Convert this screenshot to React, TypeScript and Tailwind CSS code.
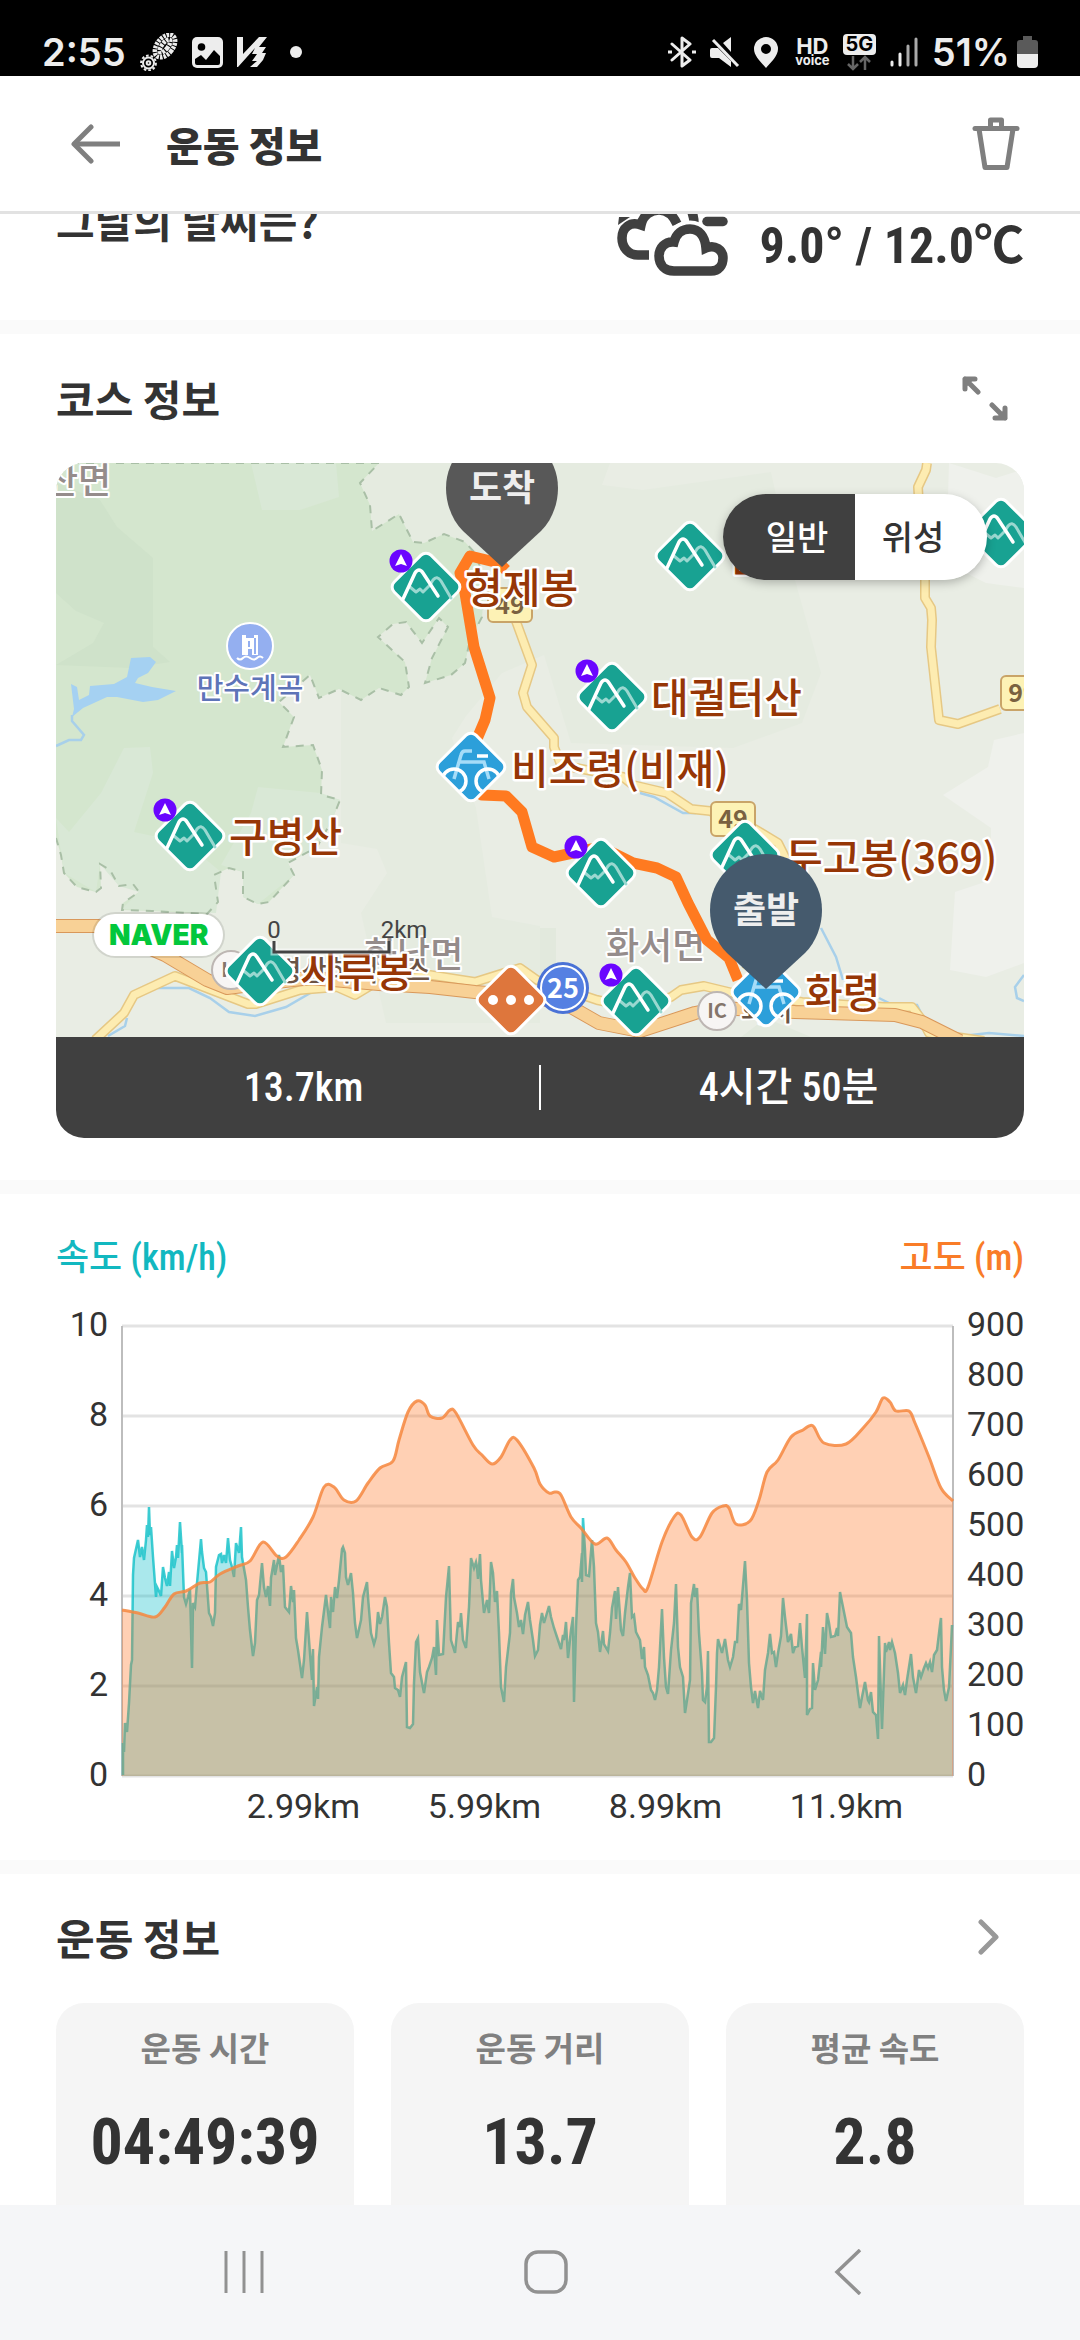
import type { ReactNode } from "react";

type Point = [number, number];

// Plot space is 831 x 450: 90 units per 2 km/h, 50 units per 100 m.
const speed: Point[] = [
  [1, 449], [1, 417], [2, 426], [3, 397], [5, 406], [7, 377], [9, 339], [10, 334], [11, 249], [12, 232], [16, 214], [18, 231],
  [20, 221], [22, 234], [24, 214], [25, 199], [26, 211], [27, 181], [28, 209], [29, 201], [31, 231], [34, 271], [35, 261], [37, 265],
  [39, 270], [41, 241], [43, 252], [45, 260], [47, 246], [48, 260], [50, 225], [52, 242], [54, 231], [55, 219], [56, 232], [58, 196],
  [60, 227], [60, 219], [62, 271], [64, 278], [66, 271], [68, 263], [70, 342], [71, 277], [73, 281], [75, 257], [79, 213], [80, 226],
  [82, 242], [84, 246], [87, 287], [89, 291], [91, 300], [93, 287], [94, 241], [97, 229], [99, 228], [100, 237], [102, 229], [104, 237],
  [106, 212], [108, 234], [110, 241], [112, 251], [114, 217], [117, 227], [119, 201], [120, 231], [124, 254], [126, 281], [128, 304],
  [131, 330], [133, 317], [135, 274], [137, 269], [140, 237], [142, 261], [144, 271], [146, 260], [148, 280], [149, 252], [152, 234],
  [153, 249], [157, 229], [159, 246], [161, 239], [163, 281], [167, 286], [169, 260], [171, 276], [172, 264], [174, 312], [176, 324],
  [180, 352], [182, 334], [185, 286], [187, 314], [190, 354], [191, 323], [192, 380], [195, 361], [196, 373], [197, 331], [200, 301],
  [204, 269], [208, 302], [209, 271], [211, 286], [213, 261], [215, 272], [217, 254], [220, 223], [221, 221], [223, 227], [224, 251],
  [226, 259], [229, 247], [231, 267], [233, 297], [235, 312], [239, 294], [241, 271], [245, 256], [246, 271], [249, 307], [252, 318],
  [254, 311], [256, 286], [258, 298], [260, 291], [263, 271], [265, 281], [267, 317], [269, 347], [272, 351], [273, 362], [276, 364],
  [278, 371], [280, 351], [284, 336], [285, 401], [288, 402], [291, 398], [292, 357], [294, 316], [296, 312], [298, 346], [302, 367],
  [305, 346], [307, 341], [310, 332], [312, 321], [314, 349], [315, 294], [317, 329], [321, 328], [324, 271], [327, 240], [329, 314],
  [333, 327], [336, 296], [338, 301], [339, 287], [341, 314], [344, 322], [347, 281], [349, 232], [352, 242], [354, 236], [355, 241],
  [356, 253], [358, 228], [359, 254], [362, 287], [365, 274], [367, 287], [369, 236], [371, 247], [373, 276], [375, 265], [377, 307],
  [379, 361], [382, 376], [384, 341], [388, 307], [389, 267], [391, 253], [392, 271], [395, 287], [397, 301], [399, 294], [401, 308],
  [403, 289], [406, 276], [408, 294], [411, 314], [413, 330], [416, 324], [418, 299], [420, 287], [422, 297], [427, 280], [429, 291],
  [432, 302], [435, 311], [439, 323], [441, 309], [442, 314], [444, 296], [446, 332], [449, 304], [451, 291], [452, 376], [454, 301],
  [456, 254], [458, 251], [460, 227], [460, 256], [461, 192], [463, 224], [464, 249], [467, 250], [470, 214], [472, 241], [474, 297],
  [476, 306], [478, 326], [481, 305], [482, 318], [486, 325], [488, 307], [490, 282], [493, 265], [494, 293], [496, 261], [499, 304],
  [501, 310], [503, 287], [506, 261], [508, 247], [510, 291], [512, 289], [514, 306], [518, 314], [520, 333], [522, 321], [523, 341],
  [526, 349], [529, 364], [531, 367], [533, 374], [535, 364], [537, 341], [540, 283], [542, 331], [544, 361], [546, 368], [549, 324],
  [552, 297], [554, 258], [556, 321], [558, 341], [561, 351], [563, 387], [565, 374], [568, 354], [569, 277], [572, 258], [573, 271],
  [575, 262], [577, 307], [580, 347], [581, 374], [583, 376], [585, 361], [586, 325], [587, 416], [589, 416], [592, 412], [594, 361],
  [595, 327], [596, 313], [600, 327], [603, 313], [606, 334], [608, 341], [611, 331], [613, 316], [615, 316], [617, 278], [619, 284],
  [623, 235], [625, 274], [627, 337], [629, 361], [631, 377], [633, 365], [636, 382], [638, 365], [641, 374], [643, 344], [646, 327],
  [648, 308], [650, 327], [652, 326], [654, 341], [656, 327], [659, 310], [661, 272], [663, 291], [666, 316], [669, 308], [671, 327],
  [673, 321], [676, 320], [678, 297], [680, 321], [683, 352], [685, 288], [685, 389], [688, 383], [690, 382], [691, 337], [693, 364],
  [696, 354], [699, 326], [699, 341], [701, 301], [703, 328], [705, 287], [707, 297], [709, 311], [713, 310], [715, 302], [716, 310],
  [718, 266], [720, 276], [723, 291], [725, 301], [729, 307], [731, 331], [734, 351], [736, 367], [738, 382], [740, 371], [743, 356],
  [746, 374], [747, 376], [749, 366], [751, 386], [754, 389], [756, 413], [757, 310], [760, 403], [763, 317], [764, 326], [767, 316],
  [768, 324], [770, 316], [773, 327], [776, 347], [778, 367], [781, 359], [783, 369], [785, 354], [789, 328], [791, 351], [794, 367],
  [797, 344], [799, 351], [802, 342], [804, 337], [806, 342], [808, 336], [810, 346], [812, 329], [815, 324], [818, 299], [819, 292],
  [820, 341], [822, 364], [824, 375], [827, 361], [829, 321], [830, 299],
];

const altitude: Point[] = [
  [0, 284], [16, 287], [33, 291], [43, 281], [52, 268], [64, 265], [78, 257], [88, 256], [98, 248], [116, 240], [128, 235],
  [141, 216], [155, 230], [164, 231], [177, 214], [191, 191], [202, 161], [212, 161], [222, 174], [234, 175], [246, 157],
  [258, 142], [271, 135], [277, 114], [286, 86], [295, 75], [303, 79], [308, 90], [320, 92], [328, 84], [334, 87], [351, 119],
  [360, 129], [370, 138], [379, 131], [388, 114], [395, 114], [412, 142], [418, 158], [427, 167], [433, 166], [439, 169],
  [449, 191], [459, 202], [473, 218], [485, 212], [494, 224], [504, 236], [513, 252], [521, 263], [526, 261], [540, 216],
  [552, 191], [559, 189], [570, 211], [578, 211], [590, 187], [601, 180], [607, 182], [614, 198], [628, 195], [637, 174],
  [645, 146], [656, 134], [669, 111], [681, 104], [687, 100], [692, 101], [702, 117], [724, 118], [742, 101], [754, 86],
  [761, 72], [768, 76], [774, 85], [787, 85], [793, 97], [807, 131], [819, 162], [831, 175],
];

const speedTicks = [10, 8, 6, 4, 2, 0];
const altitudeTicks = [900, 800, 700, 600, 500, 400, 300, 200, 100, 0];
const distanceTicks = ["2.99km", "5.99km", "8.99km", "11.9km"];

const stats = [
  { label: "운동 시간", value: "04:49:39" },
  { label: "운동 거리", value: "13.7" },
  { label: "평균 속도", value: "2.8" },
];

function linePath(points: Point[]) {
  return "M" + points.map(([x, y]) => `${x} ${y}`).join("L");
}

function smoothPath(points: Point[]) {
  let d = `M${points[0][0]} ${points[0][1]}`;
  for (let i = 0; i < points.length - 1; i++) {
    const p0 = points[Math.max(i - 1, 0)];
    const p1 = points[i];
    const p2 = points[i + 1];
    const p3 = points[Math.min(i + 2, points.length - 1)];
    d += `C${p1[0] + (p2[0] - p0[0]) / 6} ${p1[1] + (p2[1] - p0[1]) / 6} ${p2[0] - (p3[0] - p1[0]) / 6} ${p2[1] - (p3[1] - p1[1]) / 6} ${p2[0]} ${p2[1]}`;
  }
  return d;
}

function StatusBar() {
  return (
    <div className="flex h-[76px] shrink-0 items-end justify-between bg-black pr-[42px] pb-[1px] pl-[42px] text-[38px] leading-[46px] font-semibold text-[#ededed] [font-family:Inter,sans-serif]">
      <div className="flex items-center gap-[14px]">
        <span>2:55</span>
        <svg className="h-[38px] w-[38px]" viewBox="0 0 38 38" fill="none" stroke="#ededed">
          <g transform="rotate(38 25 13)">
            <ellipse cx="25" cy="13" rx="8" ry="13" strokeWidth="4.500" strokeDasharray="2.6 1" />
            <ellipse cx="25" cy="13" rx="3" ry="8" strokeWidth="4.500" strokeDasharray="2.8 1" />
          </g>
          <circle cx="8.500" cy="30" r="5.500" strokeWidth="2" />
          <circle cx="8.500" cy="30" r="7.400" strokeWidth="2" strokeDasharray="2.6 2" />
          <circle cx="8.500" cy="30" r="1.800" strokeWidth="2" />
        </svg>
        <svg className="h-[31px] w-[31px]" viewBox="0 0 31 31">
          <rect width="31" height="31" rx="5" fill="#ededed" />
          <circle cx="9.500" cy="10" r="3.800" fill="#000" />
          <path d="M3 22 9 18 14 23 22 13 28 19V26a2 2 0 0 1-2 2H5a2 2 0 0 1-2-2Z" fill="#000" />
        </svg>
        <svg className="h-[30px] w-[31px]" viewBox="0 0 31 30" fill="#ededed">
          <path d="M0 0H6V17L22 0H30L22 10H29L25 16H29L26 23 20 30H13L20 24H15L20 17H15L18 11 1 30H0Z" />
        </svg>
        <span className="ml-2 h-3 w-3 rounded-full bg-[#ededed]" />
      </div>
      <div className="flex items-center gap-[14px]">
        <svg className="h-[32px] w-[28px]" viewBox="0 0 28 32" fill="none" stroke="#ededed" strokeWidth="3">
          <path d="M4 8 22 24 14 30V2L22 8 4 24" strokeLinejoin="round" strokeLinecap="round" />
          <path d="M0 16h4M24 16h4" />
        </svg>
        <svg className="h-[31px] w-[30px]" viewBox="0 0 30 31" fill="#ededed">
          <path d="M13 6 21 0V15ZM2 11H8L21 24V30L9 21H2A2 2 0 0 1 0 19V13A2 2 0 0 1 2 11Z" />
          <path d="M3 3 28 29" stroke="#ededed" strokeWidth="3" />
        </svg>
        <svg className="h-[31px] w-[24px]" viewBox="0 0 24 31">
          <path
            d="M12 0A12 12 0 0 1 24 12C24 19 17 25 12 31 7 25 0 19 0 12A12 12 0 0 1 12 0Zm0 7a5 5 0 1 0 0 10 5 5 0 0 0 0-10Z"
            fill="#ededed"
            fillRule="evenodd"
          />
        </svg>
        <span className="ml-1 flex w-[33px] flex-col items-center text-[22px] leading-[16px] font-bold">
          HD
          <span className="text-[13px] leading-[13px]">voice</span>
        </span>
        <span className="flex w-[33px] flex-col items-center">
          <span className="w-full rounded-[4px] bg-[#ededed] text-center text-[20px] leading-[21px] font-bold text-black">
            5G
          </span>
          <svg className="h-[16px] w-[24px]" viewBox="0 0 24 16" fill="none" stroke="#666" strokeWidth="2.500">
            <path d="M6 1V14M1 9 6 14 11 9M18 15V2M13 7 18 2 23 7" />
          </svg>
        </span>
        <svg className="h-[30px] w-[28px]" viewBox="0 0 28 30" strokeWidth="3" strokeLinecap="round">
          <path d="M2 28V25M10 28V17" stroke="#ededed" />
          <path d="M18 28V9M26 28V2" stroke="#aaa" />
        </svg>
        <span className="flex items-center gap-[7px]">
          51%
          <svg className="h-[32px] w-[21px]" viewBox="0 0 21 32">
            <path d="M6 0H15V4H18A3 3 0 0 1 21 7V18H0V7A3 3 0 0 1 3 4H6Z" fill="#5a5a5a" />
            <path d="M0 18H21V28A4 4 0 0 1 17 32H4A4 4 0 0 1 0 28Z" fill="#ededed" />
          </svg>
        </span>
      </div>
    </div>
  );
}

function Header() {
  return (
    <header className="relative z-10 flex h-[138px] shrink-0 items-center border-b-[3px] border-[#e2e2e2] bg-white pr-[60px] pl-[71px]">
      <button type="button" aria-label="뒤로">
        <svg className="h-[40px] w-[50px]" viewBox="0 0 50 40" fill="none" stroke="#7f7f7f" strokeWidth="5">
          <path d="M49 20H4" />
          <path d="M20 3 3 20 20 37" strokeLinecap="round" strokeLinejoin="round" />
        </svg>
      </button>
      <h1 className="ml-[45px] flex-1 text-[40px] leading-[60px] font-black">운동 정보</h1>
      <button type="button" aria-label="삭제">
        <svg className="h-[54px] w-[48px]" viewBox="0 0 48 54" fill="none" stroke="#7f7f7f" strokeWidth="5" strokeLinejoin="round">
          <path d="M3 11.500H45" strokeLinecap="round" />
          <path d="M18.500 11V3H29.500V11M7 12 13 50.500H35L41 12" />
        </svg>
      </button>
    </header>
  );
}

function Weather() {
  return (
    <section className="-mt-10 flex items-start justify-between border-b-[14px] border-[#fafafa] px-14 pt-4 pb-11">
      <h2 className="text-[42px] leading-[60px] font-bold">그날의 날씨는?</h2>
      <div className="flex items-end gap-8">
        <svg className="h-[86px] w-[111px]" viewBox="0 0 111 86" fill="none" stroke="#404040" strokeWidth="9.500">
          <path d="M32 65H21C11 65 5 57 5 48 5 38 13 31 24 35 26 25 34 20 42 20 50 20 56 25 60 34" />
          <path d="M73 18C76 23 77 28 77 34" />
          <path d="M90 31.500H106" strokeLinecap="round" />
          <path d="M2 27H13L1 35Z" fill="#404040" stroke="none" />
          <path d="M57 81H94C102 81 106 75 106 68 106 60 98 54 89 58 88 46 82 39 73 39 65 39 59 44 57 52 48 51 42 58 42 66 42 75 48 81 57 81Z" fill="#fff" stroke="#fff" strokeWidth="17" />
          <path d="M57 81H94C102 81 106 75 106 68 106 60 98 54 89 58 88 46 82 39 73 39 65 39 59 44 57 52 48 51 42 58 42 66 42 75 48 81 57 81Z" fill="#fff" />
        </svg>
        <p className="text-[50px] leading-[60px] font-bold [font-family:'Roboto_Condensed',Roboto,'Noto_Sans_CJK_KR',sans-serif]">
          9.0° / 12.0℃
        </p>
      </div>
    </section>
  );
}

function Diamond({ x, y, color, children }: { x: number; y: number; color: string; children: ReactNode }) {
  return (
    <g transform={`translate(${x} ${y})`}>
      <rect x="-26" y="-26" width="52" height="52" rx="7" transform="rotate(45)" fill={color} stroke="#fff" strokeWidth="3" />
      {children}
    </g>
  );
}

function Mountain({ x, y, badge = false }: { x: number; y: number; badge?: boolean }) {
  return (
    <Diamond x={x} y={y} color="#18a292">
      <g fill="none" strokeWidth="3" strokeLinecap="round" strokeLinejoin="round">
        <path d="M-16 0-10 5-6 2-3 5 4-2 7-7Q11-12 15-6L25 11" stroke="#9ad8d0" />
        <path d="M-23 12-11-14Q-7-20-3-14L12 9" stroke="#fff" strokeWidth="3.500" />
      </g>
      {badge && (
        <g transform="translate(-25 -26)">
          <circle r="11.500" fill="#6a05ff" />
          <path d="M0-7 6 5 0 3-6 5Z" fill="#fff" />
        </g>
      )}
    </Diamond>
  );
}

function Bike({ x, y }: { x: number; y: number }) {
  return (
    <Diamond x={x} y={y} color="#2c9fda">
      <g fill="none" strokeWidth="3.500" clipPath="url(#diamond)">
        <path d="M1-16H-6Q-9-16-10-12L-17 12M-11-5H13L18 12" stroke="#a5dcf8" />
        <path d="M6-11H17" stroke="#fff" />
        <circle cx="-17" cy="14" r="12" stroke="#fff" />
        <circle cx="17" cy="14" r="12" stroke="#fff" />
      </g>
    </Diamond>
  );
}

function Pin({ x, y, color, label }: { x: number; y: number; color: string; label: string }) {
  return (
    <g transform={`translate(${x} ${y})`}>
      <path d="M0 79-39 43C-50 32-56 16-56 0A56 56 0 0 1 56 0C56 16 50 32 39 43Z" fill={color} />
      <text y="13" textAnchor="middle" fontSize="36" fontWeight="700" fill="#eee">
        {label}
      </text>
    </g>
  );
}

function Shield({ x, y, label }: { x: number; y: number; label: string }) {
  const width = label.length * 15 + 14;
  return (
    <g transform={`translate(${x} ${y})`}>
      <rect width={width} height="34" rx="5" fill="#fdf2b5" stroke="#c9a468" strokeWidth="2" />
      <text x={width / 2} y="26" textAnchor="middle" fontSize="25" fontWeight="700" fill="#7a6140">
        {label}
      </text>
    </g>
  );
}

function Interchange({ x, y }: { x: number; y: number }) {
  return (
    <g transform={`translate(${x} ${y})`}>
      <circle r="19" fill="#f7f5f4" stroke="#bdb6b3" strokeWidth="2" />
      <text y="7" textAnchor="middle" fontSize="20" fontWeight="700" fill="#84756b">
        IC
      </text>
    </g>
  );
}

function Road({ d, highway = false }: { d: string; highway?: boolean }) {
  return (
    <g fill="none" strokeLinejoin="round">
      <path d={d} stroke={highway ? "#d9985a" : "#e6c884"} strokeWidth={highway ? 14 : 10} />
      <path d={d} stroke={highway ? "#f8d196" : "#fdecb1"} strokeWidth={highway ? 12 : 7} />
    </g>
  );
}

const forest =
  "M0 0H323L304 20 314 42 316 68 343 51 357 79 368 80 388 71 409 79 419 90 429 117 426 154 414 177 409 200 395 212 369 220 376 195 392 164 383 155 366 180 350 159 337 161 322 174 349 199 353 224 345 232 323 225 305 237 283 226 263 235 254 212 223 239 238 254 227 284 257 282 266 307 265 332 284 337 276 357 261 384 232 400 238 412 213 439 202 441 187 434 187 409 173 405 158 412 162 439 151 451 96 448 66 447 67 440 83 429 77 421 63 423 54 407 44 401 45 425 40 429 21 424 8 410 5 392 0 375";

const peaks = [
  { x: 409, y: 140, name: "형제봉" },
  { x: 595, y: 250, name: "대궐터산" },
  { x: 455, y: 321, name: "비조령(비재)" },
  { x: 173, y: 389, name: "구병산" },
  { x: 729, y: 410, name: "두고봉(369)" },
  { x: 672, y: 108, name: "남산" },
  { x: 749, y: 545, name: "화령" },
  { x: 244, y: 524, name: "시루봉" },
];

function CourseMap() {
  return (
    <svg className="block h-auto w-full bg-[#e9ede4]" viewBox="0 0 968 574" role="img" aria-label="코스 지도">
      <clipPath id="diamond">
        <rect x="-25" y="-25" width="50" height="50" rx="6" transform="rotate(45)" />
      </clipPath>
      <path d="M200 0H554L546 22 587 27 715 9 739 117 765 210 746 260 677 285 515 280 488 192 446 210 410 253 396 275 420 345 436 454 484 463V560H330L305 450 331 410 321 386 285 380V200Z" fill="#e5ebe0" />
      <path d="M893 0 940 15 968 6V125L930 120 890 100ZM938 277 932 304 887 332 935 365V417L899 429 894 507 930 514 968 500V270Z" fill="#eff1ec" />
      <path d="M484 465 500 465V500L484 520ZM685 574 710 555 755 574Z" fill="#e2e9dd" />
      <path d={forest + "Z"} fill="#d4e6ce" />
      <path d="M0 20 44 37 61 64 97 95V184L114 199 75 205 0 202 37 180 48 160 20 148 0 130Z" fill="#cfe2ca" />
      <path d="M195 0 206 47H244L283 34 280 0ZM68 285 94 284 97 310 78 369 130 380 165 409 160 450 66 446 83 429 63 423 44 401 40 429 8 410 0 355 13 369 45 330ZM202 324 265 330 284 337 276 357 261 384 232 400 238 412 202 441 187 434 187 409 165 402 195 350Z" fill="#d9e8d6" />
      <path d={forest} fill="none" stroke="#a9bfa6" strokeWidth="2" strokeDasharray="8 7" />

      <path d="M15 221 21 224 23 237 33 232 34 223 58 221 71 214 75 195 94 194 100 199 92 210 82 215 79 220 96 224 120 228 102 237 87 239 61 234H51L27 245 16 254 18 246Z" fill="#a5d1f2" />
      <path
        d="M16 252V258L28 272 25 277 13 277 0 283M52 573 69 563 71 555M102 525H133L154 535 173 549 199 553 230 544 263 525H278L297 534 316 525M584 330 598 334 627 350H640M765 465 780 494 787 517M823 535 837 542H861L866 552M906 573 933 570 968 573M968 512 959 524 961 535 968 538"
        fill="none"
        stroke="#a8d0ea"
        strokeWidth="2.500"
      />

      <Road d="M457 150 476 202 467 230 471 244 498 275V284L505 302 567 314 577 322 611 330 635 346 654 348 697 365 722 380 732 400 728 440 690 507" />
      <Road d="M871 0 870 7 862 24 864 60 869 117V135L875 145 876 157 875 184 883 257 902 261 944 246" />
      <Road d="M39 577 68 550 78 532 119 513 192 541 200 541 244 527 281 524 299 532 319 520 374 512 419 519 464 505 481 517 541 537 580 545 615 534 625 527 648 523 677 530 746 539 828 544H856L866 557 873 570 928 578" />
      <Road highway d="M0 463H42L109 492 151 517 171 525 254 515 323 521 374 524 419 529 480 534 515 544 543 560 584 568 639 550 663 545 739 549 839 552 866 559 904 578" />

      <Shield x={432} y={125} label="49" />
      <Shield x={655} y={339} label="49" />
      <Shield x={945} y={213} label="997" />

      <g fontSize="36" fontWeight="500" fill="#958c8b" stroke="#fff" strokeWidth="4" strokeLinejoin="round" paintOrder="stroke">
        <text x="-11" y="31">산면</text>
        <text x="550" y="496">화서면</text>
        <text x="308" y="505">화남면</text>
      </g>
      <g fontSize="28" fontWeight="500" fill="#6b5344" stroke="#fff" strokeWidth="4" strokeLinejoin="round" paintOrder="stroke">
        <text x="194" y="518">구병산하이패스</text>
        <text x="685" y="558">화서</text>
        <text x="194" y="236" textAnchor="middle" fontSize="29" fill="#5e74b8">
          만수계곡
        </text>
      </g>
      <g transform="translate(194 183)">
        <circle r="23" fill="#94aff0" stroke="#fff" strokeWidth="2" />
        <path d="M-8-11H-4V-8H4V-11H8V9H2V3H-2V9H-8Z" fill="#fff" />
        <path d="M-1-5V1M5-8V8" stroke="#94aff0" strokeWidth="2" />
        <path d="M-13 12q3 3 6 0t7 0 7 0 6 0" fill="none" stroke="#fff" strokeWidth="2" />
      </g>
      <Interchange x={175} y={507} />
      <Interchange x={661} y={548} />
      <g transform="translate(507 525)">
        <circle r="26" fill="#4a72d6" />
        <circle r="22" fill="#5580e2" stroke="#fff" strokeWidth="2" />
        <text y="10" textAnchor="middle" fontSize="27" fontWeight="700" fill="#fff">
          25
        </text>
      </g>

      <path
        d="M450 107 443 100 414 93 404 110 409 130 418 184 434 235 429 257 415 290 426 332 450 333 466 349 476 384 498 394 545 384 577 400 601 405 620 414 632 440 651 477 673 495 682 517"
        fill="none"
        stroke="#ff7a20"
        strokeWidth="11"
        strokeLinejoin="round"
      />

      <Mountain x={370} y={124} badge />
      <Mountain x={556} y={234} badge />
      <Mountain x={134} y={373} badge />
      <Mountain x={545} y={410} badge />
      <Mountain x={580} y={538} badge />
      <Mountain x={634} y={93} />
      <Mountain x={945} y={70} />
      <Mountain x={689} y={392} />
      <Mountain x={204} y={508} />
      <Bike x={415} y={304} />
      <Bike x={710} y={529} />
      <Diamond x={455} y={537} color="#de763c">
        <g fill="#fff">
          <circle cx="-18" r="5" />
          <circle r="5" />
          <circle cx="18" r="5" />
        </g>
      </Diamond>

      <g fontSize="41" fontWeight="500" fill="#963606" stroke="#fff" strokeWidth="5" strokeLinejoin="round" paintOrder="stroke">
        {peaks.map((peak) => (
          <text key={peak.name} x={peak.x} y={peak.y}>
            {peak.name}
          </text>
        ))}
      </g>

      <Pin x={446} y={25} color="#585858" label="도착" />
      <Pin x={710} y={447} color="#455a6d" label="출발" />

      <path d="M218 478V489H333V478" fill="none" stroke="#fff" strokeOpacity="0.5" strokeWidth="7" />
      <path d="M218 478V489H333V478" fill="none" stroke="#444" strokeWidth="3" />
      <g fontSize="24" fill="#444" className="[font-family:Roboto,sans-serif]">
        <text x="218" y="475" textAnchor="middle">0</text>
        <text x="348" y="475" textAnchor="middle">2km</text>
      </g>
    </svg>
  );
}

function Course() {
  return (
    <section className="border-b-[14px] border-[#fafafa] px-14 pt-[34px] pb-[42px]">
      <div className="mb-[35px] flex items-center justify-between pr-4">
        <h2 className="text-[42px] leading-[60px] font-bold">코스 정보</h2>
        <button type="button" aria-label="지도 확대">
          <svg className="h-[45px] w-[46px]" viewBox="0 0 46 45" fill="none" stroke="#7f7f7f" strokeWidth="5" strokeLinecap="round" strokeLinejoin="round">
            <path d="M3 13V3H13M3 3 16 16M8 4 4 8M43 32V42H33M43 42 30 29M38 41 42 37" />
          </svg>
        </button>
      </div>
      <div className="relative overflow-hidden rounded-[28px]">
        <CourseMap />
        <div className="absolute top-[31px] right-[37px] flex h-[86px] w-[264px] overflow-hidden rounded-full text-[34px] font-medium shadow-[0_3px_10px_rgba(0,0,0,0.25)]">
          <button type="button" aria-pressed="true" className="flex-1 bg-[#404040] pb-1 pl-4 text-white">
            일반
          </button>
          <button type="button" aria-pressed="false" className="flex-1 bg-white pr-4 pb-1">
            위성
          </button>
        </div>
        <a
          href="#naver"
          className="absolute bottom-[180px] left-9 rounded-full border-2 border-black/10 bg-white bg-clip-padding px-[15px] text-[28px] leading-[42px] font-black text-[#03c73c] [font-family:Inter,sans-serif]"
        >
          NAVER
        </a>
        <div className="flex h-[101px] items-center bg-[#404040] text-center text-[40px] leading-[60px] font-medium text-white [font-family:'Roboto_Condensed',Roboto,'Noto_Sans_CJK_KR',sans-serif]">
          <p className="flex-1 pl-3">13.7km</p>
          <span className="h-[45px] w-[2px] bg-white" />
          <p className="flex-1 pl-3">4시간 50분</p>
        </div>
      </div>
    </section>
  );
}

function Chart() {
  const speedLine = linePath(speed);
  const altitudeLine = smoothPath(altitude);

  return (
    <section className="border-b-[14px] border-[#fafafa] px-14 pt-10 pb-[34px]">
      <div className="mb-11 flex justify-between text-[36px] leading-[48px] font-medium [font-family:'Roboto_Condensed','Noto_Sans_CJK_KR',sans-serif]">
        <h2 className="text-[#12b8c0]">속도 (km/h)</h2>
        <h2 className="text-[#f97c28]">고도 (m)</h2>
      </div>
      <div className="flex text-[34px] leading-[40px] [font-family:Roboto,sans-serif]">
        <div className="-mt-[22px] flex h-[490px] w-[66px] flex-col justify-between pr-[14px] text-right">
          {speedTicks.map((tick) => (
            <span key={tick}>{tick}</span>
          ))}
        </div>
        <div className="flex-1">
          <svg className="block h-[450px] w-full overflow-visible" viewBox="0 0 831 450" preserveAspectRatio="none" role="img" aria-label="속도와 고도 그래프">
            <path d="M0 0H831M0 90H831M0 180H831M0 270H831M0 360H831M0 450H831" stroke="#e3e3e3" strokeWidth="3" />
            <path d="M0 0V450M831 0V450" stroke="#bdbdbd" strokeWidth="2" />
            <path d={`${speedLine}V450H0Z`} fill="#05bbc8" fillOpacity="0.34" />
            <path d={speedLine} fill="none" stroke="#1cc3ca" strokeOpacity="0.85" strokeWidth="2.500" />
            <path d={`${altitudeLine}V450H0Z`} fill="#ff7523" fillOpacity="0.34" />
            <path d={altitudeLine} fill="none" stroke="#f6873e" strokeOpacity="0.85" strokeWidth="3" />
          </svg>
          <div className="mt-[10px] grid grid-cols-4 pr-[16px] pl-[91px] text-center">
            {distanceTicks.map((tick) => (
              <span key={tick}>{tick}</span>
            ))}
          </div>
        </div>
        <div className="-mt-[22px] flex h-[490px] w-[71px] flex-col justify-between pl-[14px]">
          {altitudeTicks.map((tick) => (
            <span key={tick}>{tick}</span>
          ))}
        </div>
      </div>
    </section>
  );
}

function Workout() {
  return (
    <section className="px-14 pt-[33px]">
      <div className="mb-9 flex items-center justify-between pr-6">
        <h2 className="text-[42px] leading-[60px] font-bold">운동 정보</h2>
        <button type="button" aria-label="운동 정보 더보기">
          <svg className="h-[36px] w-[22px]" viewBox="0 0 22 36" fill="none" stroke="#999" strokeWidth="5" strokeLinecap="round" strokeLinejoin="round">
            <path d="M3 3 18 18 3 33" />
          </svg>
        </button>
      </div>
      <div className="grid grid-cols-3 gap-[37px] text-center">
        {stats.map((stat) => (
          <div key={stat.label} className="rounded-[28px] bg-[#f5f5f5] pt-6 pb-20">
            <p className="text-[33px] leading-[40px] font-bold text-[#808080]">{stat.label}</p>
            <p className="mt-10 text-[64px] leading-[72px] font-bold [font-family:'Roboto_Condensed',Roboto,sans-serif]">
              {stat.value}
            </p>
          </div>
        ))}
      </div>
    </section>
  );
}

function SystemNav() {
  return (
    <nav className="grid h-[135px] shrink-0 grid-cols-3 place-items-center bg-[#f5f6f8] pr-[81px] pb-[2px] pl-[93px]">
      <button type="button" aria-label="최근 앱">
        <svg className="h-[46px] w-[46px]" viewBox="0 0 46 46" stroke="#919191" strokeWidth="3">
          <path d="M5 2V44M23 2V44M41 2V44" />
        </svg>
      </button>
      <button type="button" aria-label="홈">
        <svg className="h-[46px] w-[46px]" viewBox="0 0 46 46" fill="none" stroke="#919191" strokeWidth="3.500">
          <rect x="3" y="3" width="40" height="40" rx="12" />
        </svg>
      </button>
      <button type="button" aria-label="이전">
        <svg className="h-[46px] w-[46px]" viewBox="0 0 46 46" fill="none" stroke="#919191" strokeWidth="3.500">
          <path d="M35 1 12 23 35 45" />
        </svg>
      </button>
    </nav>
  );
}

export default function App() {
  return (
    <div className="flex h-screen flex-col bg-white text-[#333] [font-family:'Noto_Sans_CJK_KR',sans-serif]">
      <StatusBar />
      <Header />
      <main className="min-h-0 flex-1 overflow-hidden bg-white">
        <Weather />
        <Course />
        <Chart />
        <Workout />
      </main>
      <SystemNav />
    </div>
  );
}
